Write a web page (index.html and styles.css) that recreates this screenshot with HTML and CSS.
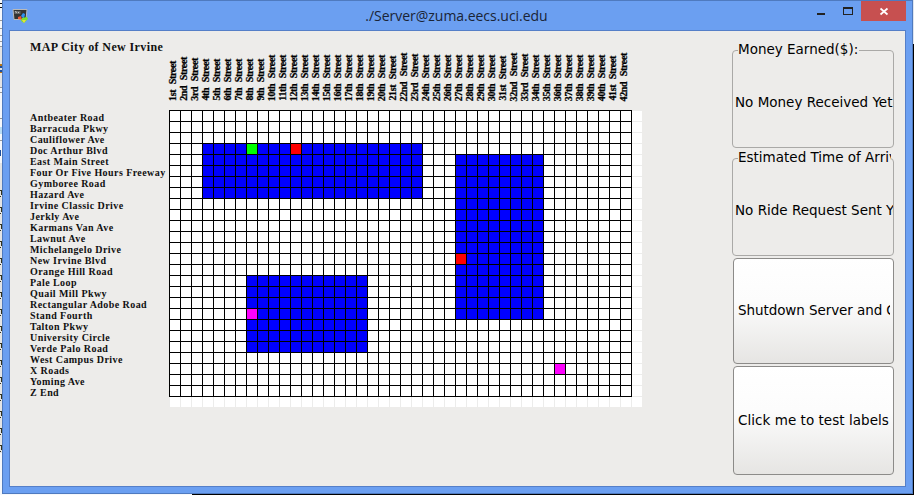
FILE: index.html
```
<!DOCTYPE html>
<html lang="en">
<head>
<meta charset="utf-8">
<title>./Server@zuma.eecs.uci.edu</title>
<link rel="stylesheet" href="styles.css">
</head>
<body>
<div class="edge-right"></div>
<div class="edge-bottom"></div>
<svg class="edge-left" width="2" height="495" shape-rendering="crispEdges">
  <path d="M0 3h2v1H0zM0 7h2v1H0z" fill="#111"/>
  <path d="M0 20h2v1H0zM0 28h2v1H0zM0 35h2v1H0zM0 41h2v1H0zM0 46h2v1H0zM0 87h2v1H0zM0 92h2v1H0zM0 118h2v1H0zM0 140h2v1H0z" fill="#999"/>
  <path d="M0 47h2v40H0zM0 163h2v290H0z" fill="#e4e4e4"/>
  <path d="M0 64h2v2H0zM0 72h2v1H0z" fill="#b87414"/>
  <path d="M0 66h2v2H0zM0 70h2v2H0zM0 150h1v6H0z" fill="#1d4e9c"/>
  <path d="M0 127h2v7H0z" fill="#b8dcf5"/>
  <g id="edge-marks"></g>
</svg>
<div class="window">
  <header class="titlebar">
    <svg class="app-icon" width="17" height="16" viewBox="0 0 17 16">
      <path d="M1 1.500h14l-1 10H2z" fill="#333" stroke="#b9b9b9"/>
      <path d="M2.500 3h6v3h-6z" fill="#666"/><path d="M3 3.500l2 1M6 4.500h1" stroke="#ddd" stroke-width=".8"/>
      <path d="M6 9l3-1 1 4-4-1z" fill="#ef5836"/>
      <path d="M11 5l2 1-1 5-3-3z" fill="#2f91f2"/>
      <path d="M10 10l5-1 1 2-4 4-3-2z" fill="#7ee22c"/>
      <path d="M10 12l4 0-2 3z" fill="#e6e23c"/>
    </svg>
    <h1 class="caption">./Server@zuma.eecs.uci.edu</h1>
    <div class="controls">
      <svg width="27" height="20" shape-rendering="crispEdges"><path d="M10 12h8v2h-8z" fill="#222"/></svg>
      <svg width="27" height="20" shape-rendering="crispEdges"><path d="M9 6h10v8H9zM10 8v5h8V8z" fill="#222" fill-rule="evenodd"/></svg>
      <svg class="close" width="45" height="20"><path d="M19.5 7.500l7 6M26.500 7.500l-7 6" stroke="#fff" stroke-width="1.700"/></svg>
    </div>
  </header>
  <main class="client">
    <section class="map">
      <h2 class="map-title">MAP City of New Irvine</h2>
      <div class="streets" id="streets"></div>
      <div class="roads" id="roads"></div>
      <div class="board">
        <div class="cells">
          <i class="block north"></i><i class="block east"></i><i class="block south"></i>
          <i class="lines"></i>
          <i class="pin green"></i><i class="pin red-a"></i><i class="pin red-b"></i>
          <i class="pin pink-a"></i><i class="pin pink-b"></i>
        </div>
      </div>
    </section>
    <aside class="panel">
      <fieldset class="group money"><legend><span>Money Earned($):</span></legend><p>No Money Received Yet</p></fieldset>
      <fieldset class="group time"><legend><span>Estimated Time of Arrival:</span></legend><p>No Ride Request Sent Yet</p></fieldset>
      <button class="action"><span>Shutdown Server and Close</span></button>
      <button class="action last"><span>Click me to test labels</span></button>
    </aside>
  </main>
</div>
<script src="map.js"></script>
</body>
</html>
```
FILE: styles.css
```
* { box-sizing: border-box; }
html, body { margin: 0; height: 100%; overflow: hidden; }
body { background: #f6f8fb; padding: 0 1px 1px 2px; }
.edge-right { position: absolute; right: 0; top: 0; width: 1px; height: 495px; background: linear-gradient(#dfe5ee 44px, #000 44px); }
.edge-bottom { position: absolute; left: 192px; right: 0; bottom: 0; height: 1px; background: #000; }
.edge-left { position: absolute; left: 0; top: 0; }
.window { position: relative; width: 911px; height: 494px; background: #6b9ff1; border: 1px solid #4f7abf; display: flex; flex-direction: column; }
.titlebar { height: 29px; flex: none; display: flex; position: relative; justify-content: center; }
.app-icon { position: absolute; left: 9px; top: 7px; }
.caption { margin: 0 2px 0 0; font: 14px/29px "Open Sans", sans-serif; letter-spacing: -.03px; color: #1a2436; }
.controls { position: absolute; right: 6px; top: 0; display: flex; }
.close { background: #c75050; }
.client { margin: 0 6px 6px; flex: 1; border: 1px solid #557fc8; background: #edecea; display: flex; justify-content: space-between; }
.map { padding: 8px 0 0 20px; display: grid; grid-template-columns: 139px 474px; grid-template-rows: 16px 46px 9px 298px; align-content: start; }
.map-title { grid-column: 1 / -1; grid-row: 1; margin: 0; font: bold 12px/16px "Liberation Serif", serif; letter-spacing: .39px; color: #111; white-space: nowrap; }
.streets { grid-column: 2; grid-row: 2; display: flex; align-items: flex-end; margin-left: -2px; }
.street { width: 11px; flex: none; writing-mode: vertical-rl; transform: rotate(180deg); font: bold 10px/11px "Liberation Serif", serif; letter-spacing: -.35px; word-spacing: .6px; -webkit-text-stroke: .25px #000; white-space: pre; color: #000; }
.roads { grid-column: 1; grid-row: 4; padding-top: 2px; }
.road { font: bold 10px/11px "Liberation Serif", serif; letter-spacing: .43px; color: #111; white-space: nowrap; }
.board { grid-column: 2; grid-row: 4; }
.cells { width: 473px; height: 297px; position: relative; display: grid; grid-template-columns: repeat(43, 11px); grid-template-rows: repeat(27, 11px);
  background: repeating-linear-gradient(90deg, #ececeb 0 1px, transparent 1px 11px), repeating-linear-gradient(#ececeb 0 1px, transparent 1px 11px), #fff; }
.block { background: #00f; }
.pin { position: relative; margin: 1px 0 0 1px; }
.north { grid-area: 4 / 4 / 9 / 24; }
.east { grid-area: 5 / 27 / 20 / 35; }
.south { grid-area: 16 / 8 / 23 / 19; }
.green { grid-area: 4 / 8; background: #0f0; }
.red-a { grid-area: 4 / 12; background: #f00; }
.red-b { grid-area: 14 / 27; background: #f00; }
.pink-a { grid-area: 19 / 8; background: #f0f; }
.pink-b { grid-area: 24 / 36; background: #f0f; }
.lines { position: absolute; left: 0; top: 0; width: 463px; height: 287px;
  background: repeating-linear-gradient(90deg, #000 0 1px, transparent 1px 11px), repeating-linear-gradient(#000 0 1px, transparent 1px 11px); }
.panel { width: 162px; margin-right: 11px; display: flex; flex-direction: column; color: #000; font: 13.5px/18px "DejaVu Sans", sans-serif; }
.group { margin: 9px 0 0; padding: 0; height: 108px; min-width: 0; border: 1px solid #aaa9a7; border-radius: 4px; overflow: hidden; }
.time { margin-top: 0; }
.group legend { margin-left: 5px; padding: 0 1px 0 0; height: 20px; max-width: 153px; overflow: hidden; white-space: nowrap; }
.group p { margin: 33px 0 0 2px; white-space: nowrap; }
.action { width: 161px; height: 107px; margin: 1px 0 0 1px; padding: 0 4px; border: 1px solid #8c8b89; border-radius: 4px; background: linear-gradient(#fff, #fcfcfc 40%, #e6e5e3); font: inherit; color: inherit; text-align: left; }
.time + .action { margin-top: 2px; height: 106px; padding-bottom: 2px; }
.time + .action span { letter-spacing: -.08px; }
.action.last { margin-top: 2px; height: 109px; padding-bottom: 1px; }
.action span { display: block; overflow: hidden; white-space: nowrap; width: 152px; letter-spacing: .04px; }
```
FILE: map.js
```
const roads = ['Antbeater Road', 'Barracuda Pkwy', 'Cauliflower Ave', 'Doc Arthur Blvd', 'East Main Street',
  'Four Or Five Hours Freeway', 'Gymboree Road', 'Hazard Ave', 'Irvine Classic Drive', 'Jerkly Ave',
  'Karmans Van Ave', 'Lawnut Ave', 'Michelangelo Drive', 'New Irvine Blvd', 'Orange Hill Road', 'Pale Loop',
  'Quail Mill Pkwy', 'Rectangular Adobe Road', 'Stand Fourth', 'Talton Pkwy', 'University Circle',
  'Verde Palo Road', 'West Campus Drive', 'X Roads', 'Yoming Ave', 'Z End'];
const add = (id, cls, text) => {
  const el = document.createElement('div');
  el.className = cls;
  el.textContent = text;
  document.getElementById(id).append(el);
};
roads.forEach(name => add('roads', 'road', name));
for (let n = 1; n <= 42; n++) {
  const teen = n > 10 && n < 14;
  const suffix = teen ? 'th' : ({ 1: 'st', 2: 'nd', 3: 'rd' }[n % 10] || 'th');
  add('streets', 'street', n + suffix + '  Street');
}
let marks = '';
for (let y = 190; y < 450; y += 17) {
  marks += `<path d="M0 ${y}h2v1H0zM1 ${y + 1}h1v4H1zM0 ${y + 6}h1v1H0z" fill="#34331c"/>`;
}
document.getElementById('edge-marks').innerHTML = marks;
```
